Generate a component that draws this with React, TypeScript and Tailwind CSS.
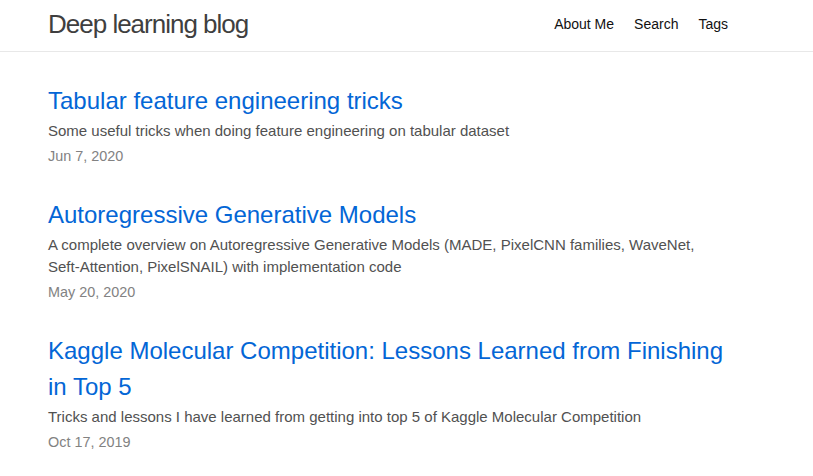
const posts = [
  {
    title: "Tabular feature engineering tricks",
    description: "Some useful tricks when doing feature engineering on tabular dataset",
    date: "Jun 7, 2020",
  },
  {
    title: "Autoregressive Generative Models",
    description:
      "A complete overview on Autoregressive Generative Models (MADE, PixelCNN families, WaveNet, Seft-Attention, PixelSNAIL) with implementation code",
    date: "May 20, 2020",
  },
  {
    title: "Kaggle Molecular Competition: Lessons Learned from Finishing in Top 5",
    description: "Tricks and lessons I have learned from getting into top 5 of Kaggle Molecular Competition",
    date: "Oct 17, 2019",
  },
];

export default function App() {
  return (
    <div className="min-h-screen bg-white font-['Liberation_Sans',Arial,sans-serif] text-[#111]">
      {/* Header */}
      <header className="border-b border-[#e8e8e8]">
        <div className="w-[680px] ml-12 h-[51px] pb-[2px] flex items-center justify-between">
          <a className="-mt-[2px] text-[26px] tracking-[-1px] text-[#3f3f3f] font-light leading-none">Deep learning blog</a>
          <nav className="flex gap-5 text-[14px] text-[#111]">
            <a>About Me</a>
            <a>Search</a>
            <a>Tags</a>
          </nav>
        </div>
      </header>

      {/* Post list */}
      <main className="w-[680px] ml-12 pt-[31px]">
        <ul className="flex flex-col gap-[30px]">
          {posts.map((post) => (
            <li key={post.title}>
              <h3 className="text-[24px] leading-[36px] text-[#0366d6]">{post.title}</h3>
              <p className="mt-px text-[15px] leading-[22px] text-[#515151]">{post.description}</p>
              <span className="block mt-[3px] text-[14.4px] leading-[22px] text-[#828282]">{post.date}</span>
            </li>
          ))}
        </ul>
      </main>
    </div>
  );
}
